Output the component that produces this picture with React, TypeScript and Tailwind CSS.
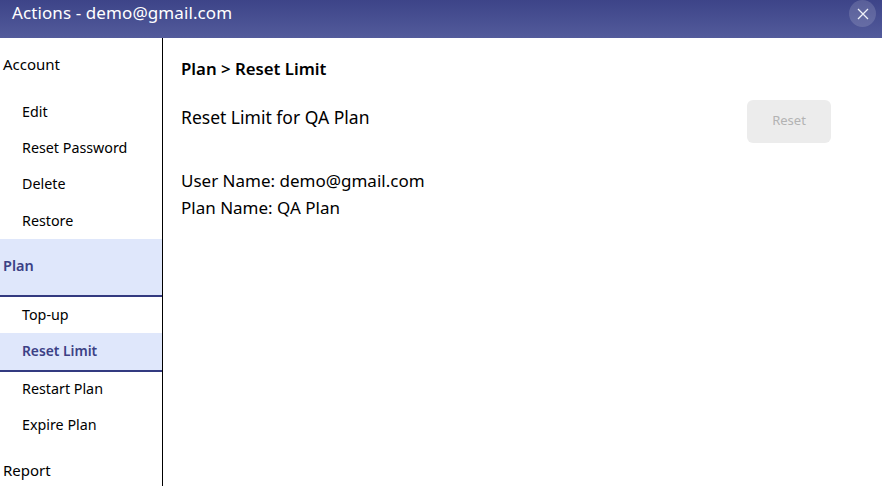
const font = { fontFamily: '"Noto Sans", sans-serif' };

function Sub({ label, h, active = false }: { label: string; h: string; active?: boolean }) {
  return (
    <div
      className={`${h} shrink-0 flex items-center pl-[22px] ${
        active
          ? "bg-[#dfe7fb] text-[#3b4185] text-[13.8px] font-semibold border-b-2 border-[#333a80]"
          : "text-black text-[14.3px]"
      }`}
    >
      {label}
    </div>
  );
}

function Head({ label, h, active = false }: { label: string; h: string; active?: boolean }) {
  return (
    <div
      className={`${h} shrink-0 flex items-center pl-[3px] ${
        active
          ? "bg-[#dfe7fb] text-[#3b4185] text-[14.5px] font-semibold border-b-2 border-[#333a80] pb-[3px]"
          : "text-black text-[15px] pb-[2px]"
      }`}
    >
      {label}
    </div>
  );
}

export default function App() {
  return (
    <div className="w-[882px] h-[486px] overflow-hidden bg-white flex flex-col" style={font}>
      <header className="h-[38px] shrink-0 bg-gradient-to-b from-[#3d4488] to-[#535b9b] flex items-start justify-between pl-[12px] pr-[6px]">
        <span className="text-white text-[17px] leading-[25px] tracking-[0.1px]">Actions - demo@gmail.com</span>
        <button className="w-[27px] h-[27px] rounded-full bg-white/15 flex items-center justify-center">
          <svg width="12" height="12" viewBox="0 0 12 12" fill="none" stroke="#eef0f8" strokeWidth="1.3">
            <path d="M1 1 L11 11 M11 1 L1 11" />
          </svg>
        </button>
      </header>
      <div className="flex flex-1 min-h-0">
        <aside className="w-[163px] shrink-0 border-r border-black flex flex-col overflow-hidden">
          <Head label="Account" h="h-[55px]" />
          <Sub label="Edit" h="h-[37px]" />
          <Sub label="Reset Password" h="h-[36px]" />
          <Sub label="Delete" h="h-[36px]" />
          <Sub label="Restore" h="h-[37px]" />
          <Head label="Plan" h="h-[58px]" active />
          <Sub label="Top-up" h="h-[36px]" />
          <Sub label="Reset Limit" h="h-[39px]" active />
          <Sub label="Restart Plan" h="h-[34px]" />
          <Sub label="Expire Plan" h="h-[38px]" />
          <Head label="Report" h="h-[54px]" />
        </aside>
        <main className="flex-1 pl-[18px] pr-[51px] pt-[20px] text-black">
          <h1 className="text-[16.8px] leading-[22px] font-semibold">Plan &gt; Reset Limit</h1>
          <div className="flex items-start justify-between mt-[20px]">
            <p className="text-[17.5px] leading-[24px] pt-[5px]">Reset Limit for QA Plan</p>
            <button className="w-[84px] h-[43px] rounded-[6px] bg-[#ececec] text-[#b3b3b3] text-[13px] pb-[2px]">Reset</button>
          </div>
          <div className="mt-[24px] text-[17px] leading-[27px]">
            <p>User Name: demo@gmail.com</p>
            <p>Plan Name: QA Plan</p>
          </div>
        </main>
      </div>
    </div>
  );
}
